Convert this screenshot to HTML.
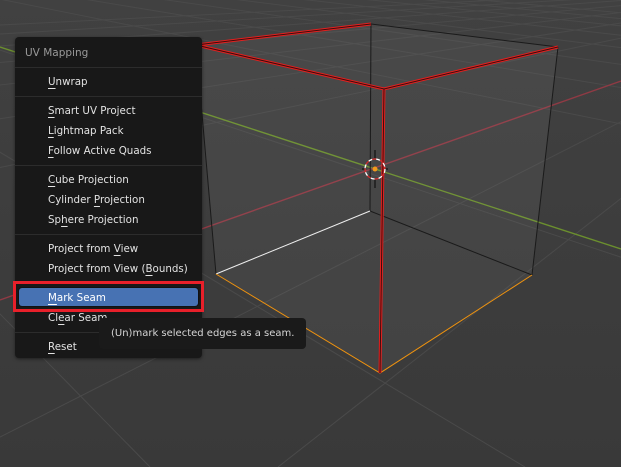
<!DOCTYPE html>
<html><head><meta charset="utf-8"><style>
html,body{margin:0;padding:0;width:621px;height:467px;overflow:hidden;background:#3d3d3d;font-family:"DejaVu Sans","Liberation Sans",sans-serif}
svg{position:absolute;left:0;top:0}
.menu{position:absolute;left:15px;top:37px;width:187px;height:321px;background:#181818;border-radius:4px;box-shadow:0 1px 3px rgba(0,0,0,.5)}
.t{position:absolute;left:10px;font-size:10.5px;color:#9a9a9a;line-height:14px}
.it{position:absolute;left:33px;font-size:10.3px;color:#e2e2e2;line-height:14px;white-space:nowrap;margin-top:1px}
.u{text-decoration:underline;text-underline-offset:3px}
.sep{position:absolute;left:0;width:187px;height:1px;background:#2c2c2c}
.hl{position:absolute;left:4px;top:251px;width:179px;height:18px;background:#4772b3;border-radius:3px;box-shadow:0 0 0 1px #111}
.red{position:absolute;left:13px;top:281px;width:185px;height:25px;border:3px solid #e8202a}
.tip{position:absolute;left:99px;top:318px;width:207px;height:31px;background:#1a1a1a;border-radius:4px;color:#d6d6d6;font-size:10px;line-height:31px;padding-left:12px;box-sizing:border-box;white-space:nowrap}
</style></head><body>
<svg width="621" height="467" viewBox="0 0 621 467">
<defs><linearGradient id="bg" x1="0" y1="0" x2="0" y2="1"><stop offset="0" stop-color="#414141"/><stop offset="1" stop-color="#393939"/></linearGradient></defs>
<rect width="621" height="467" fill="url(#bg)"/>
<g stroke="#4a4a4a" stroke-width="1" fill="none">
<line x1="-384" y1="-78" x2="150" y2="467"/>
<line x1="-384" y1="-78" x2="525" y2="467"/>
<line x1="-384" y1="-78" x2="1250" y2="467"/>
<line x1="-384" y1="-78" x2="-60" y2="467"/>
<line x1="-384" y1="-78" x2="1000" y2="200"/>
<line x1="-384" y1="-78" x2="1000" y2="150"/>
<line x1="-384" y1="-78" x2="1000" y2="118"/>
<line x1="-384" y1="-78" x2="1000" y2="95"/>
<line x1="-384" y1="-78" x2="1000" y2="78"/>
<line x1="-384" y1="-78" x2="1000" y2="65"/>
<line x1="-384" y1="-78" x2="1000" y2="55"/>
<line x1="-384" y1="-78" x2="1000" y2="47"/>
<line x1="900" y1="-20" x2="-59" y2="467"/>
<line x1="900" y1="-20" x2="278" y2="467"/>
<line x1="900" y1="-20" x2="700" y2="467"/>
<line x1="900" y1="-20" x2="-300" y2="230"/>
<line x1="900" y1="-20" x2="-300" y2="165"/>
<line x1="900" y1="-20" x2="-300" y2="120"/>
<line x1="900" y1="-20" x2="-300" y2="90"/>
<line x1="900" y1="-20" x2="-300" y2="68"/>
<line x1="900" y1="-20" x2="-300" y2="52"/>
<line x1="900" y1="-20" x2="-300" y2="40"/>
</g>
<line x1="0" y1="47" x2="621" y2="249" stroke="#6b8f2e" stroke-width="1.4"/>
<line x1="0" y1="300" x2="621" y2="81" stroke="#8f3a44" stroke-width="1.4"/>
<polygon points="196,45 371,24 558,47 532,275 380,373 216,274" fill="rgba(255,255,255,0.045)"/>
<g fill="none" stroke-width="1">
<line x1="371" y1="24" x2="370" y2="211" stroke="#1a1a1a"/>
<line x1="370" y1="211" x2="532" y2="275" stroke="#1a1a1a"/>
<line x1="371" y1="24" x2="558" y2="47" stroke="#1a1a1a"/>
<line x1="558" y1="47" x2="532" y2="275" stroke="#1a1a1a"/>
<line x1="196" y1="45" x2="216" y2="274" stroke="#1a1a1a"/>
<line x1="216" y1="274" x2="370" y2="211" stroke="#eeeeee"/>
<polyline points="216,274 380,373 532,275" stroke="#f0930e"/>
</g>
<g fill="none" stroke-width="3" stroke="#e2201f">
<polyline points="196,45 371,24"/><polyline points="196,45 384,89 558,47"/><line x1="384" y1="89" x2="380" y2="373"/>
</g>
<g fill="none" stroke-width="1" stroke="#3a0c0c">
<polyline points="196,45 371,24"/><polyline points="196,45 384,89 558,47"/><line x1="384" y1="89" x2="380" y2="373"/>
</g>
<line x1="375" y1="150" x2="375" y2="158" stroke="#111" stroke-width="1.2"/>
<line x1="375" y1="180" x2="375" y2="188" stroke="#111" stroke-width="1.2"/>
<line x1="362" y1="169" x2="365" y2="169" stroke="#111" stroke-width="1.2"/>
<line x1="385" y1="169" x2="388" y2="169" stroke="#111" stroke-width="1.2"/>
<circle cx="375" cy="169" r="10" fill="none" stroke="#fff" stroke-width="1.3" stroke-dasharray="4 4"/>
<circle cx="375" cy="169" r="10" fill="none" stroke="#d42a2a" stroke-width="1.3" stroke-dasharray="4 4" stroke-dashoffset="4"/>
<circle cx="375" cy="169" r="2.5" fill="#f29a1c"/>
</svg>
<div class="menu">
<div class="t" style="top:9px">UV Mapping</div>
<div class="sep" style="top:30px"></div>
<div class="it" style="top:37px"><span class="u">U</span>nwrap</div>
<div class="sep" style="top:59px"></div>
<div class="it" style="top:66px"><span class="u">S</span>mart UV Project</div>
<div class="it" style="top:86px"><span class="u">L</span>ightmap Pack</div>
<div class="it" style="top:106px"><span class="u">F</span>ollow Active Quads</div>
<div class="sep" style="top:128px"></div>
<div class="it" style="top:135px"><span class="u">C</span>ube Projection</div>
<div class="it" style="top:155px">Cylinder <span class="u">P</span>rojection</div>
<div class="it" style="top:175px">Sp<span class="u">h</span>ere Projection</div>
<div class="sep" style="top:197px"></div>
<div class="it" style="top:204px">Project from <span class="u">V</span>iew</div>
<div class="it" style="top:224px">Project from View (<span class="u">B</span>ounds)</div>
<div class="sep" style="top:246px"></div>
<div class="hl"></div>
<div class="it" style="top:253px;color:#fff"><span class="u">M</span>ark Seam</div>
<div class="it" style="top:273px">Cl<span class="u">e</span>ar Seam</div>
<div class="sep" style="top:295px"></div>
<div class="it" style="top:302px"><span class="u">R</span>eset</div>
</div>
<div class="red"></div>
<div class="tip">(Un)mark selected edges as a seam.</div>
</body></html>
